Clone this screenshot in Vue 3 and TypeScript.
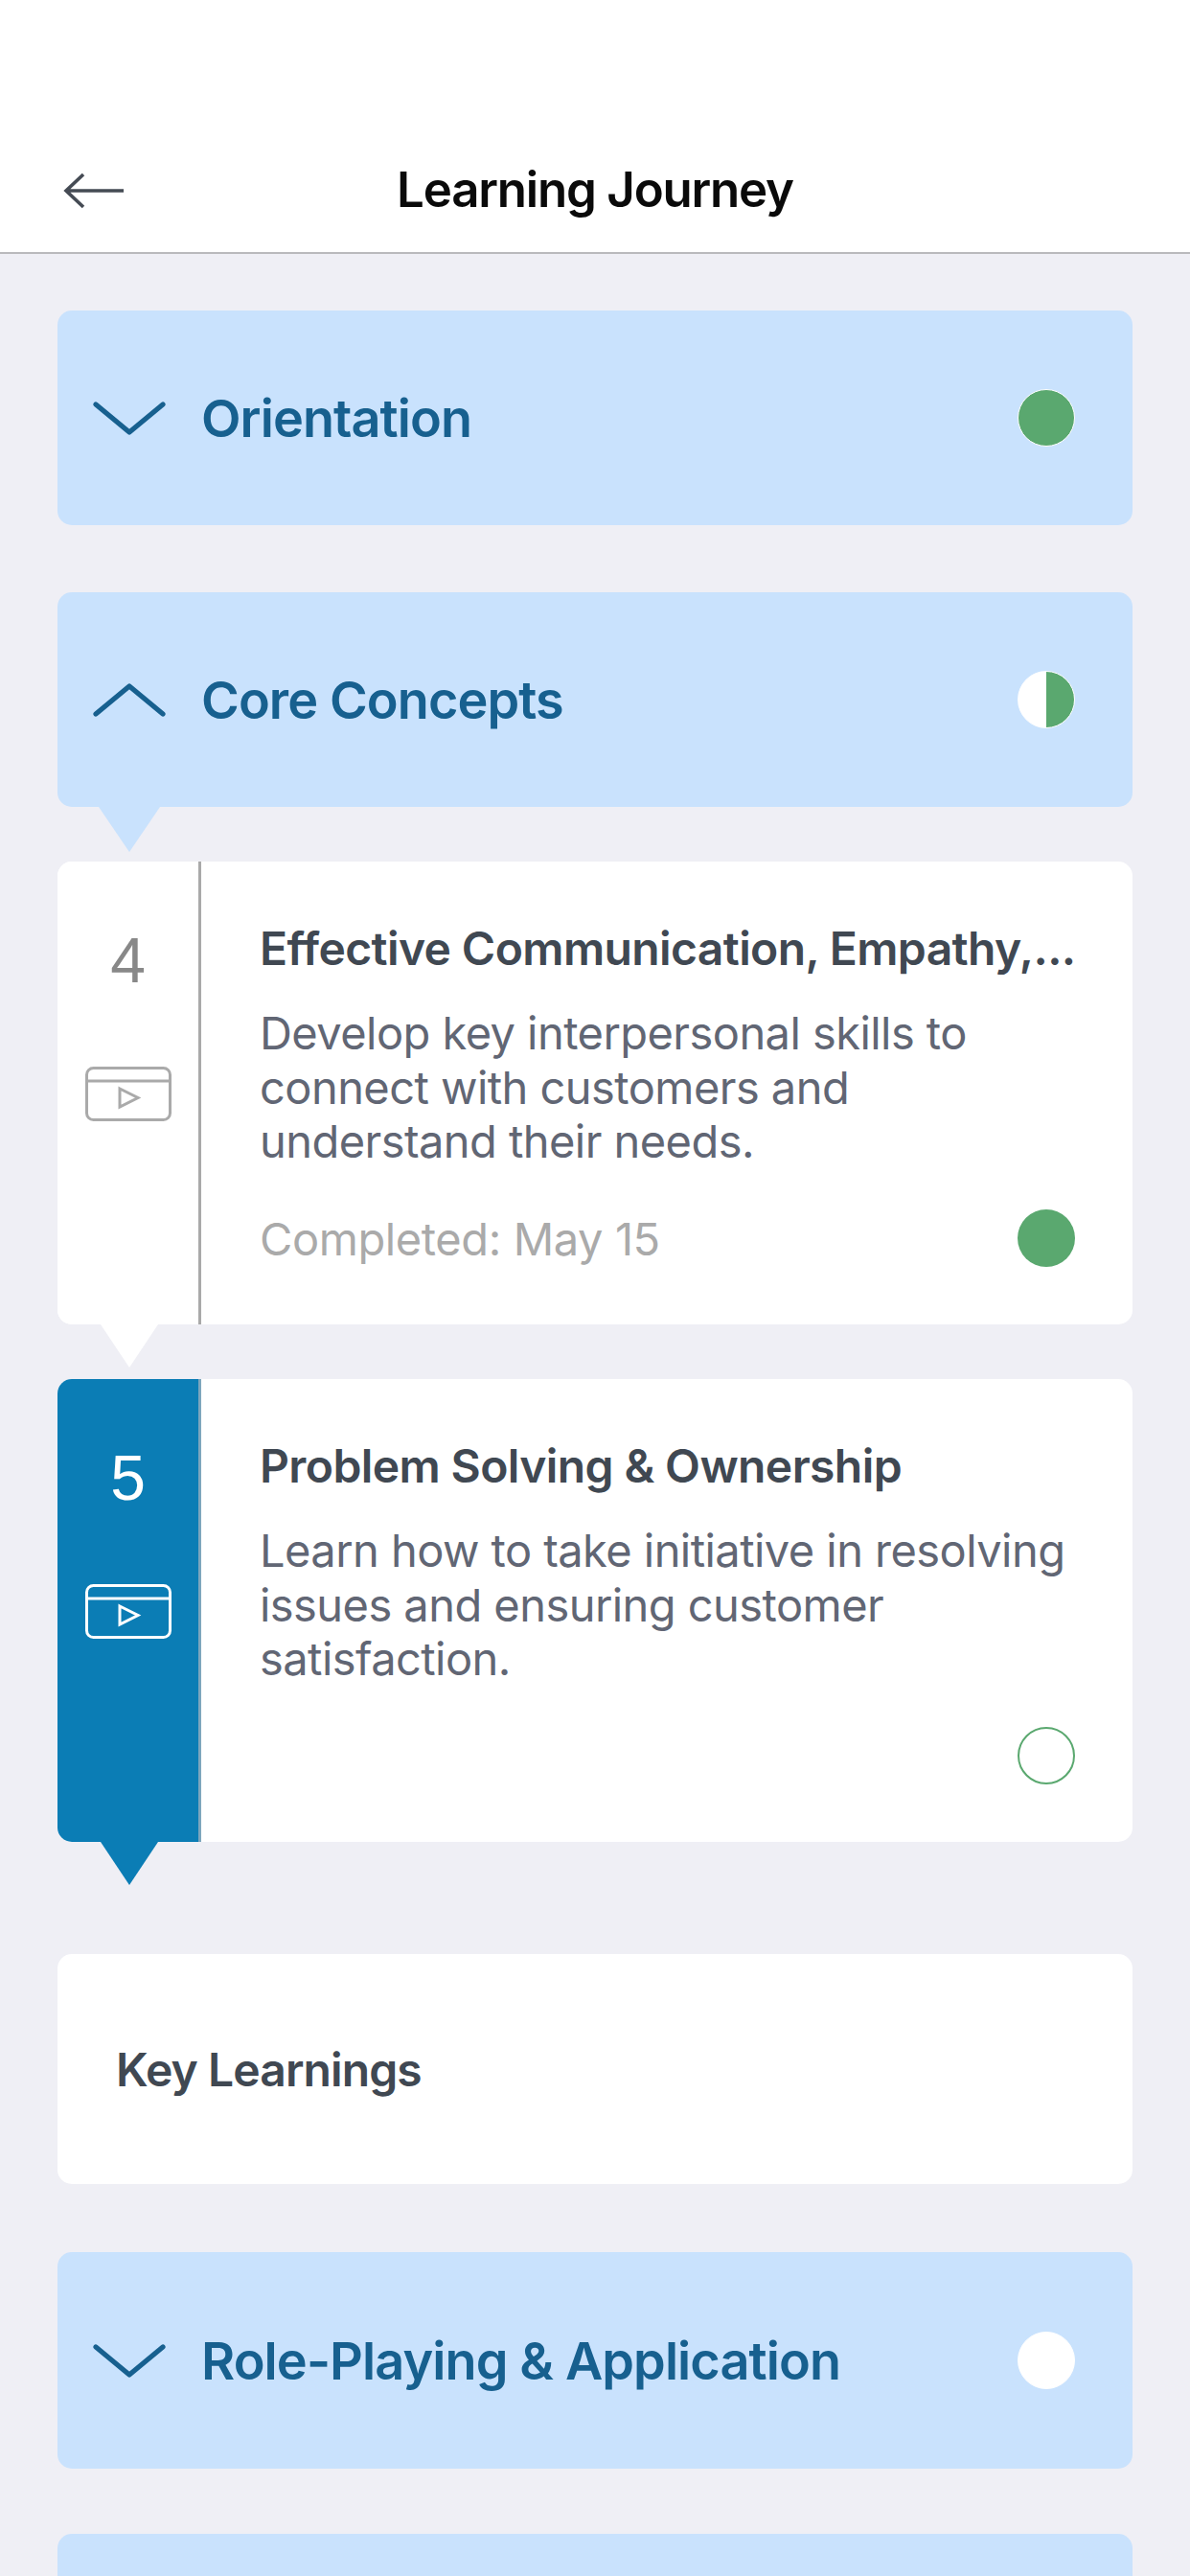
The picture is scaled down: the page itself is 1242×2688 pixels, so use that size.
<script setup lang="ts">
type Status = 'full' | 'half' | 'empty'
interface Lesson {
  num: number
  title: string
  desc: string
  meta: string
  status: 'done' | 'todo'
  active: boolean
}
const lessons: Lesson[] = [
  {
    num: 4,
    title: 'Effective Communication, Empathy,...',
    desc: 'Develop key interpersonal skills to connect with customers and understand their needs.',
    meta: 'Completed: May 15',
    status: 'done',
    active: false,
  },
  {
    num: 5,
    title: 'Problem Solving & Ownership',
    desc: 'Learn how to take initiative in resolving issues and ensuring customer satisfaction.',
    meta: '',
    status: 'todo',
    active: true,
  },
]
const statusA: Status = 'full'
const statusB: Status = 'half'
const statusC: Status = 'empty'
</script>

<template>
  <div class="screen">
    <header class="nav">
      <svg class="back" width="64" height="40" viewBox="0 0 64 40" fill="none">
        <path d="M21 3 L3 20 L21 37 M3 20 H63" stroke="#454b54" stroke-width="3.6" />
      </svg>
      <h1 class="nav-title">Learning Journey</h1>
    </header>

    <main class="list">
      <section class="module">
        <svg class="chev" width="76" height="36" viewBox="0 0 76 36" fill="none">
          <path d="M3 4 L38 33 L73 4" stroke="#17608f" stroke-width="5.2" stroke-linecap="round" stroke-linejoin="round" />
        </svg>
        <span class="module-name">Orientation</span>
        <span class="dot" :class="statusA"></span>
      </section>

      <section class="module module-open">
        <svg class="chev" width="76" height="36" viewBox="0 0 76 36" fill="none">
          <path d="M3 33 L38 4 L73 33" stroke="#17608f" stroke-width="5.2" stroke-linecap="round" stroke-linejoin="round" />
        </svg>
        <span class="module-name">Core Concepts</span>
        <span class="dot" :class="statusB"></span>
      </section>

      <article v-for="l in lessons" :key="l.num" class="lesson" :class="{ active: l.active }">
        <div class="rail">
          <span class="num">{{ l.num }}</span>
          <svg class="vid" width="90" height="57" viewBox="0 0 90 57" fill="none">
            <rect x="1.5" y="1.5" width="87" height="54" rx="7" stroke="currentColor" stroke-width="3" />
            <path d="M1.5 15 H88.5" stroke="currentColor" stroke-width="3" />
            <path d="M36 23 L55 32.5 L36 42 Z" stroke="currentColor" stroke-width="3" />
          </svg>
        </div>
        <div class="body">
          <h2 class="lesson-title">{{ l.title }}</h2>
          <p class="desc">{{ l.desc }}</p>
          <div class="foot">
            <span class="meta">{{ l.meta }}</span>
            <span class="mark" :class="l.status"></span>
          </div>
        </div>
      </article>

      <section class="key">Key Learnings</section>

      <section class="module module-third">
        <svg class="chev" width="76" height="36" viewBox="0 0 76 36" fill="none">
          <path d="M3 4 L38 33 L73 4" stroke="#17608f" stroke-width="5.2" stroke-linecap="round" stroke-linejoin="round" />
        </svg>
        <span class="module-name">Role-Playing &amp; Application</span>
        <span class="dot" :class="statusC"></span>
      </section>

      <section class="module module-last"></section>
    </main>
  </div>
</template>

<style scoped>
.screen {
  width: 1242px;
  height: 2688px;
  overflow: hidden;
  background: #efeff5;
  font-family: Inter, "Liberation Sans", sans-serif;
}
.nav {
  height: 265px;
  box-sizing: border-box;
  background: #fff;
  border-bottom: 2px solid #b9b9bc;
  position: relative;
  display: flex;
  justify-content: center;
  align-items: flex-end;
  padding-bottom: 34px;
}
.back {
  position: absolute;
  left: 66px;
  top: 179px;
}
.nav-title {
  margin: 0;
  font-size: 51px;
  line-height: 62px;
  font-weight: 600;
  letter-spacing: -1.2px;
  color: #0a0a0a;
}
.list {
  padding: 59px 60px 0;
}
.module {
  position: relative;
  height: 224px;
  box-sizing: border-box;
  background: #c9e2fd;
  border-radius: 15px;
  display: flex;
  align-items: center;
  padding: 0 60px 0 37px;
}
.module-open {
  margin-top: 70px;
}
.module-open::after {
  content: "";
  position: absolute;
  left: 43px;
  top: 100%;
  border-left: 32px solid transparent;
  border-right: 32px solid transparent;
  border-top: 47px solid #c9e2fd;
}
.module-third {
  margin-top: 71px;
  height: 226px;
}
.module-last {
  margin-top: 68px;
  height: 200px;
}
.chev {
  flex: none;
  margin-right: 37px;
}
.module-name {
  flex: 1;
  font-size: 54px;
  font-weight: 600;
  letter-spacing: -0.9px;
  color: #17608f;
}
.dot {
  flex: none;
  width: 60px;
  height: 60px;
  box-sizing: border-box;
  border-radius: 50%;
  border: 1.5px solid #fff;
}
.dot.full {
  background: #5aa86f;
}
.dot.half {
  background: linear-gradient(90deg, #fff 50%, #5aa86f 50%);
}
.dot.empty {
  background: #fff;
}
.lesson {
  position: relative;
  margin-top: 57px;
  height: 483px;
  background: #fff;
  border-radius: 15px;
  display: flex;
}
.rail {
  position: relative;
  flex: none;
  width: 147px;
  border-right: 3px solid #a9a9a9;
  border-radius: 15px 0 0 15px;
  background: #fff;
  color: #aaa;
  display: flex;
  flex-direction: column;
  align-items: center;
}
.rail::after {
  content: "";
  position: absolute;
  left: 45px;
  top: 100%;
  border-left: 30px solid transparent;
  border-right: 30px solid transparent;
  border-top: 45px solid #fff;
}
.active .rail {
  background: #0b7db5;
  color: #fff;
  border-right-color: #7ea6bd;
}
.active .rail::after {
  border-top-color: #0b7db5;
}
.num {
  margin-top: 65px;
  font-family: "Liberation Sans", sans-serif;
  font-size: 66px;
  line-height: 76px;
  color: #888;
}
.active .num {
  color: #fff;
}
.vid {
  margin-top: 73px;
}
.body {
  flex: 1;
  min-width: 0;
  padding: 62px 60px 60px 61px;
  display: flex;
  flex-direction: column;
}
.lesson-title {
  margin: 0;
  font-size: 48px;
  line-height: 58px;
  font-weight: 600;
  letter-spacing: -0.6px;
  color: #404852;
  white-space: nowrap;
}
.desc {
  margin: 31px 0 0;
  font-size: 47px;
  line-height: 56.5px;
  font-weight: 400;
  letter-spacing: -0.55px;
  color: #616674;
}
.foot {
  margin-top: auto;
  display: flex;
  justify-content: space-between;
  align-items: center;
}
.meta {
  font-size: 47px;
  letter-spacing: -0.4px;
  color: #aaa;
}
.mark {
  width: 60px;
  height: 60px;
  box-sizing: border-box;
  border-radius: 50%;
}
.mark.done {
  background: #5aa86f;
}
.mark.todo {
  border: 2px solid #5aa86f;
  background: #fff;
}
.key {
  margin-top: 117px;
  height: 240px;
  box-sizing: border-box;
  background: #fff;
  border-radius: 15px;
  display: flex;
  align-items: center;
  padding-left: 61px;
  font-size: 48px;
  font-weight: 600;
  letter-spacing: -0.9px;
  color: #404852;
}
</style>
